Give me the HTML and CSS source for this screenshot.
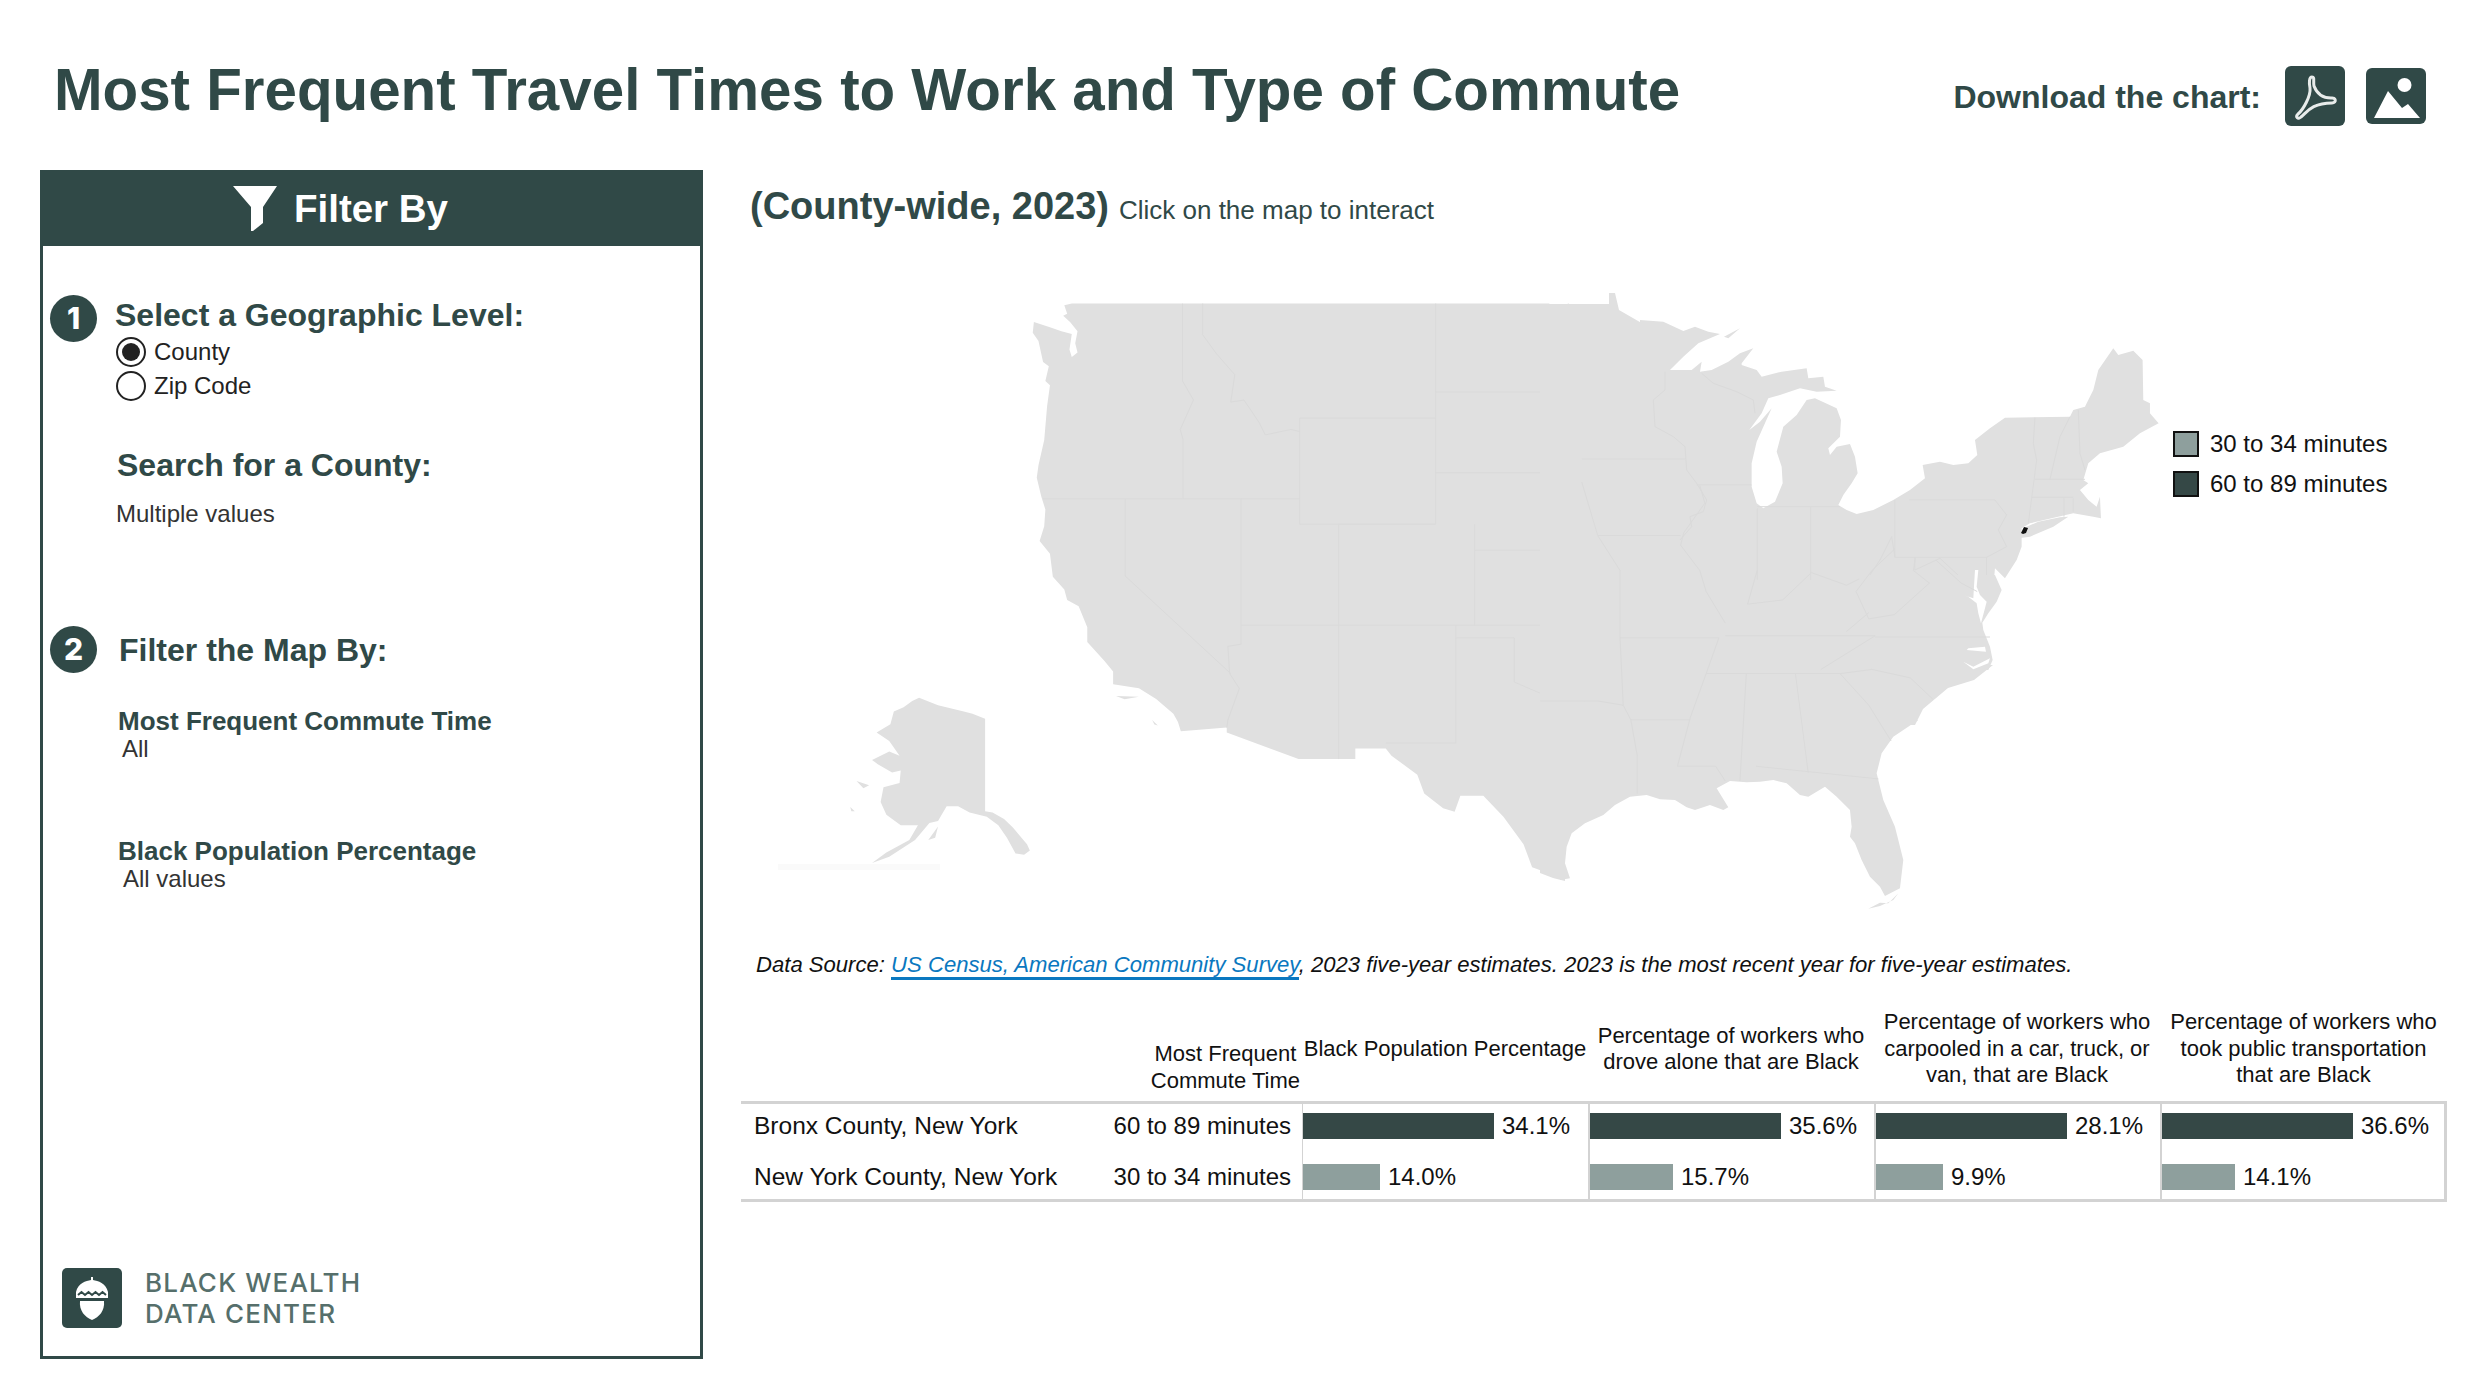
FILE: index.html
```html
<!DOCTYPE html>
<html lang="en">
<head>
    <meta charset="UTF-8">
    <title>Most Frequent Travel Times to Work and Type of Commute</title>
    <link rel="stylesheet" href="styles.css">
</head>
<body>
    <header class="top">
        <h1>Most Frequent Travel Times to Work and Type of Commute</h1>
        <div class="download">
            <span>Download the chart:</span>
            <svg class="dl-pdf" viewBox="0 0 60 60" width="60" height="60">
                <rect width="60" height="60" rx="6" fill="#304947"/>
                <path d="M27 11C24 11 24 17 25 22C26 30 18 44 13 48C10 51 13 54 16 51C22 46 27 37 47 37C52 37 51 31 46 32C38 32 32 28 29 20C28 15 30 11 27 11Z" fill="none" stroke="#e8eceb" stroke-width="3"/>
            </svg>
            <svg class="dl-img" viewBox="0 0 60 56" width="60" height="56">
                <rect width="60" height="56" rx="6" fill="#304947"/>
                <circle cx="38.500" cy="17" r="7" fill="#fff"/>
                <path d="M8 50L22 23L36 40L42 36L54 50Z" fill="#fff"/>
            </svg>
        </div>
    </header>

    <div class="content">
        <aside class="sidebar">
            <div class="side-head">
                <svg viewBox="0 0 44 45" width="44" height="45">
                    <path d="M0 0H44L30 21V37L20 45H18V21Z" fill="#fff"/>
                </svg>
                <span>Filter By</span>
            </div>

            <div class="step step-one">
                <span class="badge">1</span>
                <div class="step-body">
                    <h2>Select a Geographic Level:</h2>
                    <div class="radio"><i class="dot on"></i>County</div>
                    <div class="radio"><i class="dot"></i>Zip Code</div>
                </div>
            </div>

            <div class="search">
                <h2>Search for a County:</h2>
                <p>Multiple values</p>
            </div>

            <div class="step step-two">
                <span class="badge">2</span>
                <h2>Filter the Map By:</h2>
            </div>

            <div class="filter">
                <h3>Most Frequent Commute Time</h3>
                <p>All</p>
            </div>
            <div class="filter">
                <h3>Black Population Percentage</h3>
                <p>All values</p>
            </div>

            <div class="brand">
                <svg viewBox="0 0 60 60" width="60" height="60">
                    <rect width="60" height="60" rx="5" fill="#304947"/>
                    <path d="M14 24C16 15 24 13 29 12V9H31V12C36 13 44 15 46 24V30H14Z" fill="#fff"/>
                    <path d="M18 33H42C43 43 37 49 30 52C23 49 17 43 18 33Z" fill="#fff"/>
                    <path d="M16 27l3.500-3 3.500 3 3.500-3 3.500 3 3.500-3 3.500 3 3.500-3 3.500 3" fill="none" stroke="#304947" stroke-width="2"/>
                </svg>
                <div class="brand-name">BLACK WEALTH<br>DATA CENTER</div>
            </div>
        </aside>

        <main class="main">
            <div class="sub">
                <strong>(County-wide, 2023)</strong>
                <span>Click on the map to interact</span>
            </div>

            <div class="map-wrap">
                <svg class="map" viewBox="741 230 1706 720" width="1706" height="720">
                    <!-- west -->
                    <g transform="translate(740 280) scale(.574 .421)">
                        <path class="land" d="M578 56L1410 56L1410 1410L1380 1395L1365 1340L1330 1275L1295 1225L1255 1225L1245 1263L1225 1255L1192 1220L1180 1175L1135 1130L1125 1113L1072 1113L1072 1138L973 1138L848 1075L848 1063L768 1072L763 1050L755 1030L725 995L695 970L650 960L650 930L635 905L605 860L605 825L590 775L570 760L565 735L545 705L540 650L522 620L530 585L532 545L525 515L517 470L520 440L530 380L535 300L540 250L532 240L538 205L528 195L520 145L510 125L512 100L540 112L560 122L578 128L574 165L578 183L588 172L584 150L588 122L575 100L563 85L570 80L565 60Z"/>
                        <path class="land" d="M312 992L345 1010L390 1025L405 1030L427 1042L427 1262L440 1265L460 1280L475 1300L500 1340L505 1355L495 1365L480 1362L465 1325L450 1295L430 1275L400 1265L380 1250L360 1250L345 1285L330 1290L305 1330L260 1370L230 1385L255 1360L295 1330L310 1295L280 1295L255 1270L245 1240L250 1205L278 1195L280 1165L265 1170L240 1150L230 1140L260 1120L278 1130L260 1095L238 1075L262 1055L268 1025L285 1015L300 1000Z"/>
                        <path class="land" d="M328 1330L345 1298L340 1325ZM203 1190L225 1200L215 1207ZM655 988L695 990L670 996ZM718 1045L728 1058L722 1056ZM192 1252L200 1262L194 1262Z"/>
                        <path class="line" d="M771 56V240L790 285L767 355L772 380V520M806 56V130L830 175L862 225L855 290L878 285L905 340L915 368L960 355L975 360M975 328H1212V580H975ZM1212 56V328M1212 266H1467M1212 458H1400L1420 467L1465 480M1443 56L1455 130L1460 200L1467 266L1458 290L1470 310V425L1465 480L1490 600L1505 640L1525 680L1533 700V820M1280 580V820M1280 642H1505M873 820H1533M528 520H975M873 520V865L850 870L853 935L870 970L850 1045L848 1063M671 520V703L855 935M1043 580V1138M1043 580H1212M1247 820V1100H1125M1247 850H1349V955L1400 985L1410 988"/>
                    </g>
                    <rect x="778" y="864" width="162" height="6" fill="#fafafa"/>

                    <!-- middle, page coordinates -->
                    <path class="land" d="M1540 304H1609V293H1615L1619 310L1645 325V575H1825V665H1993L1974 680L1948 688L1923 709L1915 725H1565V881L1553 878L1540 873Z"/>

                    <!-- great lakes and new england -->
                    <g transform="translate(1640 320) scale(.3333)">
                        <path class="land" d="M0 0L70 5L130 33L165 20L205 35L240 42L175 70L130 110L90 150L155 150L185 125L180 155L215 150L265 125L300 100L340 85L305 130L305 135L350 150L365 170L425 155L500 145L505 175L550 170L555 200L590 212L530 215L480 205L420 225L385 235L365 280L328 330L360 305L395 265L350 365L335 430L335 500L350 550L370 565L405 545L428 490L425 440L410 395L430 320L470 285L500 240L525 235L590 265L603 300L600 350L565 385L570 405L590 380L630 372L645 410L653 460L635 490L610 525L595 555L620 570L650 582L700 570L760 540L810 510L855 475L848 435L900 425L940 435L985 430L1012 405L1005 360L1050 325L1095 293L1290 290L1300 270L1335 260L1360 210L1375 150L1420 85L1435 105L1480 92L1508 120L1510 240L1530 250L1530 280L1556 310L1500 340L1450 380L1380 400L1345 430L1330 480L1345 490L1320 510L1345 540L1370 560L1380 530L1383 595L1360 590L1300 580L1170 610L1145 625L1145 680L1130 720L1095 775L1065 745L1062 780H0Z"/>
                        <path class="land" d="M252 50L300 25L265 55ZM1150 625L1195 605L1260 592L1285 590L1240 620L1170 650L1135 655Z"/>
                        <path class="line" d="M185 160L220 190L290 215L340 240L345 280M75 155V210L40 240L45 320L100 350L135 380L140 450L170 490L200 540L190 575L150 590L155 620L120 660M170 495H335M352 565V780M512 560V780M352 560H600M765 540V712L755 650L720 720L680 780M808 540H1065L1100 585L1075 630L1100 680L1040 712H765M825 712V750L900 715L970 780M1040 712V780M1185 293L1180 370L1190 420L1175 535L1165 610M1290 290L1260 350L1230 478M1315 270L1320 400L1335 450M1185 478H1335M1175 532H1300M1272 535V590M1300 535V575"/>
                    </g>

                    <!-- mid atlantic -->
                    <g transform="translate(1820 470) scale(.3333)">
                        <path class="land" d="M0 315H525L545 360L530 395L505 430L487 458L490 480L510 530L518 570L505 600H0Z"/>
                        <path class="gap" d="M465 300L475 300L470 350L480 375L500 395L495 415L483 460L475 430L470 400L445 380L430 375L460 385L462 350ZM445 535L495 530L498 545L440 540ZM430 575L460 590L510 565L505 580L460 598Z"/>
                    </g>

                    <!-- gulf and florida -->
                    <g transform="translate(1560 720) scale(.3333)">
                        <path class="land" d="M0 480L30 475L15 430L20 380L35 340L75 310L130 285L165 255L210 230L260 225L300 238L345 240L380 262L405 270L450 255L490 270L505 262L470 205L510 183L560 187L600 185L640 180L680 190L720 225L745 230L795 200L830 230L870 270L875 320L870 350L885 370L905 420L930 470L960 500L975 528L1020 505L1030 420L1005 320L970 240L950 160L965 100L1000 50L1075 0H0Z"/>
                        <path class="land" d="M925 566L960 548L985 550L1015 520L1000 540L960 558Z"/>
                    </g>

                    <!-- state lines, south and east -->
                    <g transform="translate(1400 280) scale(.6378 .421)">
                        <path class="line" d="M220 1000H290L310 1000L350 1010M345 690V850M285 480L310 607L345 690M285 425H447M470 488L478 530L445 600L440 630L470 690L480 740L510 815M310 607H440M560 690L545 770L600 760L645 695L700 725L720 710M775 640L740 690L715 740L735 805L775 795L830 720L805 690L808 660M840 665L880 720L905 740M510 845H745M745 848H925M700 835L735 790M745 845L660 925M480 935H690M543 935L533 1190M620 935L640 1170M558 1155L750 1185M435 1155H495L510 1190M435 1155L455 1040L480 935L500 850M345 850H500M362 1045H455M345 850L350 1010L362 1045L372 1130V1220M690 935L735 1010L770 1095M690 935L740 925L800 945L835 995"/>
                    </g>

                    <path d="M2021 533L2024 527L2028 528L2026 533L2023 534Z" fill="#111"/>
                </svg>
                <div class="legend">
                    <div class="legend-item"><i class="swatch light"></i>30 to 34 minutes</div>
                    <div class="legend-item"><i class="swatch dark"></i>60 to 89 minutes</div>
                </div>
            </div>

            <p class="source">Data Source: <a href="#">US Census, American Community Survey</a>, 2023 five-year estimates. 2023 is the most recent year for five-year estimates.</p>

            <div class="tbl">
                <div class="th th-first">Most Frequent<br>Commute Time</div>
                <div class="th">Black Population Percentage</div>
                <div class="th">Percentage of workers who<br>drove alone that are Black</div>
                <div class="th">Percentage of workers who<br>carpooled in a car, truck, or<br>van, that are Black</div>
                <div class="th">Percentage of workers who<br>took public transportation<br>that are Black</div>

                <div class="name row-a"><span class="county">Bronx County, New York</span><span>60 to 89 minutes</span></div>
                <div class="cell row-a thin"><i class="bar dark" style="width:191px"></i>34.1%</div>
                <div class="cell row-a"><i class="bar dark" style="width:191px"></i>35.6%</div>
                <div class="cell row-a"><i class="bar dark" style="width:191px"></i>28.1%</div>
                <div class="cell row-a last"><i class="bar dark" style="width:191px"></i>36.6%</div>

                <div class="name row-b"><span class="county">New York County, New York</span><span>30 to 34 minutes</span></div>
                <div class="cell row-b thin"><i class="bar light" style="width:77px"></i>14.0%</div>
                <div class="cell row-b"><i class="bar light" style="width:83px"></i>15.7%</div>
                <div class="cell row-b"><i class="bar light" style="width:67px"></i>9.9%</div>
                <div class="cell row-b last"><i class="bar light" style="width:73px"></i>14.1%</div>
            </div>
        </main>
    </div>
</body>
</html>
```

FILE: styles.css
```css
:root {
    --green: #304947;
    --bar-dark: #354846;
    --bar-light: #8e9f9d;
    --rule: #d3d3d3;
}

body {
    margin: 0;
    width: 2486px;
    height: 1398px;
    overflow: hidden;
    background: #fff;
    color: #111;
    font-family: "Liberation Sans", Arial, sans-serif;
    font-size: 24px;
}

h1, h2, h3, p {
    margin: 0;
}

.top {
    height: 170px;
    box-sizing: border-box;
    padding: 54px 60px 0 54px;
    display: flex;
    justify-content: space-between;
    align-items: flex-start;
}

h1 {
    font-size: 58.300px;
    line-height: 72px;
    color: var(--green);
}

.download {
    display: flex;
    align-items: center;
    height: 60px;
    margin-top: 12px;
    font-size: 32px;
    font-weight: bold;
    color: var(--green);
}

.download span {
    padding-top: 2px;
}

.dl-pdf {
    margin-left: 24px;
}

.dl-img {
    margin-left: 21px;
}

.content {
    display: flex;
    padding-left: 40px;
}

.sidebar {
    width: 663px;
    height: 1189px;
    box-sizing: border-box;
    border: 3px solid var(--green);
    border-top: 0;
    display: flex;
    flex-direction: column;
}

.side-head {
    height: 76px;
    margin: 0 -3px;
    padding-right: 62px;
    background: var(--green);
    color: #fff;
    display: flex;
    align-items: center;
    justify-content: center;
    gap: 17px;
    font-size: 38.500px;
    font-weight: bold;
}

.side-head span {
    padding-top: 2px;
}

.sidebar h2 {
    font-size: 32px;
    line-height: 38px;
    color: var(--green);
}

.sidebar h3 {
    font-size: 26px;
    line-height: 30px;
    color: var(--green);
}

.step {
    display: flex;
}

.step-one {
    margin: 49px 0 0 7px;
    gap: 18px;
}

.step-body {
    margin-top: 1px;
}

.step-two {
    margin: 98px 0 0 7px;
    gap: 22px;
    align-items: center;
}

.badge {
    width: 47px;
    height: 47px;
    flex: none;
    border-radius: 50%;
    background: var(--green);
    color: #fff;
    font-family: Inter, "Liberation Sans", sans-serif;
    font-size: 30px;
    font-weight: 800;
    line-height: 47px;
    text-align: center;
}

.radio {
    display: flex;
    align-items: center;
    height: 34px;
    gap: 8px;
    padding-top: 1px;
    color: #222;
}

.radio + .radio {
    padding-top: 0;
}

.dot {
    width: 30px;
    height: 30px;
    margin-left: 1px;
    box-sizing: border-box;
    border: 2px solid #222;
    border-radius: 50%;
    display: flex;
    align-items: center;
    justify-content: center;
}

.dot.on::after {
    content: "";
    width: 18px;
    height: 18px;
    border-radius: 50%;
    background: #222;
}

.search {
    margin: 43px 0 0 74px;
}

.search p {
    margin-top: 16px;
    margin-left: -1px;
    color: #333;
}

.filter {
    margin: 33px 0 0 75px;
    height: 52px;
}

.filter + .filter {
    margin-top: 78px;
}

.filter p {
    margin: 1px 0 0 4px;
    line-height: 24px;
    color: #333;
}

.filter + .filter p {
    margin-left: 5px;
}

.brand {
    margin: auto 0 27px 19px;
    display: flex;
    align-items: center;
    gap: 23px;
}

.brand-name {
    font-family: Inter, "Liberation Sans", sans-serif;
    font-size: 26px;
    line-height: 31px;
    font-weight: 500;
    letter-spacing: 1.200px;
    color: #566f6b;
}

.main {
    width: 1706px;
    margin-left: 38px;
}

.sub {
    display: flex;
    align-items: baseline;
    gap: 10px;
    height: 60px;
    padding-left: 9px;
    color: var(--green);
}

.sub strong {
    font-size: 38px;
    line-height: 72px;
}

.sub span {
    font-size: 26px;
}

.map-wrap {
    position: relative;
    height: 720px;
}

.map {
    display: block;
}

.land {
    fill: #e0e0e0;
    stroke: none;
}

.line {
    fill: none;
    stroke: #dadada;
    stroke-width: 1;
    vector-effect: non-scaling-stroke;
}

.gap {
    fill: #fff;
}

.legend {
    position: absolute;
    left: 1432px;
    top: 201px;
}

.legend-item {
    display: flex;
    align-items: center;
    height: 26px;
    gap: 11px;
    margin-bottom: 14px;
}

.swatch {
    width: 26px;
    height: 26px;
    box-sizing: border-box;
    border: 2px solid #111;
}

.swatch.light, .bar.light {
    background: var(--bar-light);
}

.swatch.dark, .bar.dark {
    background: var(--bar-dark);
}

.source {
    margin: 1px 0 0 15px;
    font-size: 22.100px;
    font-style: italic;
    line-height: 28px;
}

.source a {
    color: #0a78c0;
    text-decoration: none;
    border-bottom: 3px solid #0a78c0;
}

.tbl {
    display: grid;
    grid-template-columns: 561px 286px 286px 286px 287px;
    grid-template-rows: 86px 50px 51px;
    margin-top: 36px;
    width: 1706px;
}

.th {
    display: flex;
    align-items: center;
    justify-content: center;
    text-align: center;
    line-height: 26.500px;
    font-size: 22px;
    padding-bottom: 18px;
    box-sizing: border-box;
    white-space: nowrap;
}

.th-first {
    justify-content: flex-end;
    align-items: flex-end;
    padding-bottom: 7px;
    padding-right: 2px;
}

.name {
    display: flex;
    justify-content: space-between;
    align-items: center;
    padding: 0 11px 0 13px;
}

.county {
    font-size: 24.500px;
}

.cell {
    display: flex;
    align-items: center;
    gap: 8px;
    border-left: 2px solid var(--rule);
    line-height: 1;
}

.cell.thin {
    border-left-width: 1px;
}

.cell.last {
    border-right: 3px solid var(--rule);
}

.row-a {
    border-top: 3px solid var(--rule);
    padding-bottom: 3px;
}

.row-b {
    border-bottom: 3px solid var(--rule);
    padding-top: 3px;
}

.bar {
    height: 26px;
}
```
